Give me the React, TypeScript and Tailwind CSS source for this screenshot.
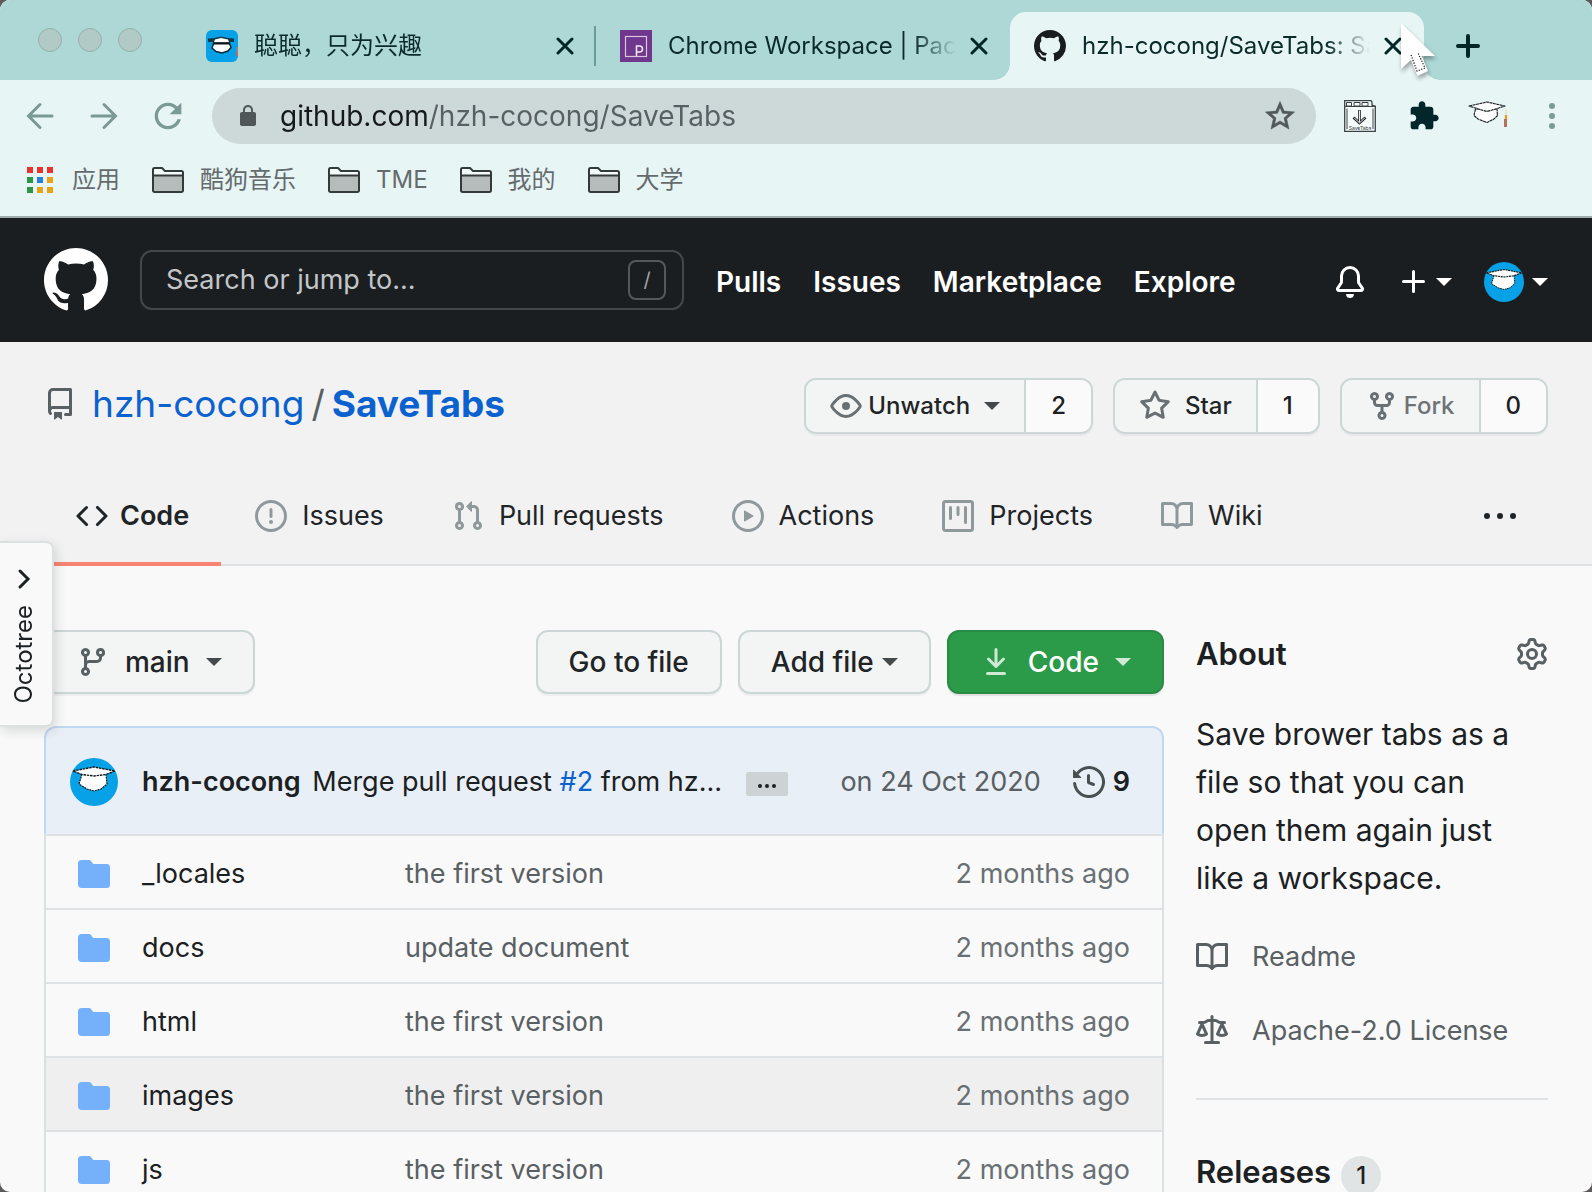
import React from "react";

const P = {
  github:
    "M8 0C3.58 0 0 3.58 0 8c0 3.54 2.29 6.53 5.47 7.59.4.07.55-.17.55-.38 0-.19-.01-.82-.01-1.49-2.01.37-2.53-.49-2.69-.94-.09-.23-.48-.94-.82-1.13-.28-.15-.68-.52-.01-.53.63-.01 1.08.58 1.23.82.72 1.21 1.87.87 2.33.66.07-.52.28-.87.51-1.07-1.78-.2-3.64-.89-3.64-3.95 0-.87.31-1.59.82-2.15-.08-.2-.36-1.02.08-2.12 0 0 .67-.21 2.2.82.64-.18 1.32-.27 2-.27.68 0 1.36.09 2 .27 1.53-1.04 2.2-.82 2.2-.82.44 1.1.16 1.92.08 2.12.51.56.82 1.27.82 2.15 0 3.07-1.87 3.75-3.65 3.95.29.25.54.73.54 1.48 0 1.07-.01 1.93-.01 2.2 0 .21.15.46.55.38A8.013 8.013 0 0016 8c0-4.42-3.58-8-8-8z",
  repo: "M2 2.5A2.5 2.5 0 014.5 0h8.75a.75.75 0 01.75.75v12.5a.75.75 0 01-.75.75h-2.5a.75.75 0 110-1.5h1.75v-2h-8a1 1 0 00-.714 1.7.75.75 0 01-1.072 1.05A2.495 2.495 0 012 11.5v-9zm10.5-1V9h-8c-.356 0-.694.074-1 .208V2.5a1 1 0 011-1h8zM5 12.25v3.25a.25.25 0 00.4.2l1.45-1.087a.25.25 0 01.3 0L8.6 15.7a.25.25 0 00.4-.2v-3.25a.25.25 0 00-.25-.25h-3.5a.25.25 0 00-.25.25z",
  eye: "M1.679 7.932c.412-.621 1.242-1.75 2.366-2.717C5.175 4.242 6.527 3.5 8 3.5c1.473 0 2.824.742 3.955 1.715 1.124.967 1.954 2.096 2.366 2.717a.119.119 0 010 .136c-.412.621-1.242 1.75-2.366 2.717C10.825 11.758 9.473 12.5 8 12.5c-1.473 0-2.824-.742-3.955-1.715C2.92 9.818 2.09 8.69 1.679 8.068a.119.119 0 010-.136zM8 2c-1.981 0-3.67.992-4.933 2.078C1.797 5.169.88 6.423.43 7.1a1.619 1.619 0 000 1.798c.45.678 1.367 1.932 2.637 3.024C4.329 13.008 6.019 14 8 14c1.981 0 3.67-.992 4.933-2.078 1.27-1.091 2.187-2.345 2.637-3.023a1.619 1.619 0 000-1.798c-.45-.678-1.367-1.932-2.637-3.023C11.671 2.992 9.981 2 8 2zm0 8a2 2 0 100-4 2 2 0 000 4z",
  star: "M8 .25a.75.75 0 01.673.418l1.882 3.815 4.21.612a.75.75 0 01.416 1.279l-3.046 2.97.719 4.192a.75.75 0 01-1.088.791L8 12.347l-3.766 1.98a.75.75 0 01-1.088-.79l.72-4.194L.818 6.374a.75.75 0 01.416-1.28l4.21-.611L7.327.668A.75.75 0 018 .25zm0 2.445L6.615 5.5a.75.75 0 01-.564.41l-3.097.45 2.24 2.184a.75.75 0 01.216.664l-.528 3.084 2.769-1.456a.75.75 0 01.698 0l2.77 1.456-.53-3.084a.75.75 0 01.216-.664l2.24-2.183-3.096-.45a.75.75 0 01-.564-.41L8 2.694v.001z",
  fork: "M5 3.25a.75.75 0 11-1.5 0 .75.75 0 011.5 0zm0 2.122a2.25 2.25 0 10-1.5 0v.878A2.25 2.25 0 005.75 8.5h1.5v2.128a2.251 2.251 0 101.5 0V8.5h1.5a2.25 2.25 0 002.25-2.25v-.878a2.25 2.25 0 10-1.5 0v.878a.75.75 0 01-.75.75h-4.5A.75.75 0 015 6.25v-.878zm3.75 7.378a.75.75 0 11-1.5 0 .75.75 0 011.5 0zm3-8.75a.75.75 0 100-1.5.75.75 0 000 1.5z",
  code: "M4.72 3.22a.75.75 0 011.06 1.06L2.06 8l3.72 3.72a.75.75 0 11-1.06 1.06L.47 8.53a.75.75 0 010-1.06l4.25-4.25zm6.56 0a.75.75 0 10-1.06 1.06L13.94 8l-3.72 3.72a.75.75 0 101.06 1.06l4.25-4.25a.75.75 0 000-1.06l-4.25-4.25z",
  issue:
    "M8 1.5a6.5 6.5 0 100 13 6.5 6.5 0 000-13zM0 8a8 8 0 1116 0A8 8 0 010 8zm9 3a1 1 0 11-2 0 1 1 0 012 0zm-.25-6.25a.75.75 0 00-1.5 0v3.5a.75.75 0 001.5 0v-3.5z",
  pull: "M7.177 3.073L9.573.677A.25.25 0 0110 .854v4.792a.25.25 0 01-.427.177L7.177 3.427a.25.25 0 010-.354zM3.75 2.5a.75.75 0 100 1.5.75.75 0 000-1.5zm-2.25.75a2.25 2.25 0 113 2.122v5.256a2.251 2.251 0 11-1.5 0V5.372A2.25 2.25 0 011.5 3.25zM11 2.5h-1V4h1a1 1 0 011 1v5.628a2.251 2.251 0 101.5 0V5A2.5 2.5 0 0011 2.5zm1 10.25a.75.75 0 111.5 0 .75.75 0 01-1.5 0zM3.75 12a.75.75 0 100 1.5.75.75 0 000-1.5z",
  play: "M1.5 8a6.5 6.5 0 1113 0 6.5 6.5 0 01-13 0zM8 0a8 8 0 100 16A8 8 0 008 0zM6.379 5.227A.25.25 0 006 5.442v5.117a.25.25 0 00.379.214l4.264-2.559a.25.25 0 000-.428L6.379 5.227z",
  project:
    "M1.75 0A1.75 1.75 0 000 1.75v12.5C0 15.216.784 16 1.75 16h12.5A1.75 1.75 0 0016 14.25V1.75A1.75 1.75 0 0014.25 0H1.75zM1.5 1.75a.25.25 0 01.25-.25h12.5a.25.25 0 01.25.25v12.5a.25.25 0 01-.25.25H1.75a.25.25 0 01-.25-.25V1.75zM11.75 3a.75.75 0 00-.75.75v7.5a.75.75 0 001.5 0v-7.5a.75.75 0 00-.75-.75zm-8.25.75a.75.75 0 011.5 0v5.5a.75.75 0 01-1.5 0v-5.5zM8 3a.75.75 0 00-.75.75v3.5a.75.75 0 001.5 0v-3.5A.75.75 0 008 3z",
  book: "M0 1.75A.75.75 0 01.75 1h4.253c1.227 0 2.317.59 3 1.501A3.744 3.744 0 0111.006 1h4.245a.75.75 0 01.75.75v10.5a.75.75 0 01-.75.75h-4.507a2.25 2.25 0 00-1.591.659l-.622.621a.75.75 0 01-1.06 0l-.622-.621A2.25 2.25 0 005.258 13H.75a.75.75 0 01-.75-.75V1.75zm8.755 3a2.25 2.25 0 012.25-2.25H14.5v9h-3.757c-.71 0-1.4.201-1.992.572l.004-7.322zm-1.504 7.324l.004-5.073-.002-2.253A2.25 2.25 0 005.003 2.5H1.5v9h3.757a3.75 3.75 0 011.994.574z",
  branch:
    "M11.75 2.5a.75.75 0 100 1.5.75.75 0 000-1.5zm-2.25.75a2.25 2.25 0 113 2.122V6A2.5 2.5 0 0110 8.5H6a1 1 0 00-1 1v1.128a2.251 2.251 0 11-1.5 0V5.372a2.25 2.25 0 111.5 0v1.836A2.492 2.492 0 016 7h4a1 1 0 001-1v-.628A2.25 2.25 0 019.5 3.25zM4.25 12a.75.75 0 100 1.5.75.75 0 000-1.5zM3.5 3.25a.75.75 0 111.5 0 .75.75 0 01-1.5 0z",
  download:
    "M7.47 10.78a.75.75 0 001.06 0l3.75-3.75a.75.75 0 00-1.06-1.06L8.75 8.439V1.75a.75.75 0 00-1.5 0v6.69L4.78 5.97a.75.75 0 00-1.06 1.06l3.75 3.75zM3.75 13a.75.75 0 000 1.5h8.5a.75.75 0 000-1.5h-8.5z",
  gear: "M7.429 1.525a6.593 6.593 0 011.142 0c.036.003.108.036.137.146l.289 1.105c.147.56.55.967.997 1.189.174.086.341.183.501.29.417.278.97.423 1.53.27l1.102-.303c.11-.03.175.016.195.046.219.31.41.641.573.989.014.031.022.11-.059.19l-.815.806c-.411.406-.562.957-.53 1.456a4.588 4.588 0 010 .582c-.032.499.119 1.05.53 1.456l.815.806c.08.08.073.159.059.19a6.494 6.494 0 01-.573.99c-.02.029-.086.074-.195.045l-1.103-.303c-.559-.153-1.112-.008-1.529.27-.16.107-.327.204-.5.29-.449.222-.851.628-.998 1.189l-.289 1.105c-.029.11-.101.143-.137.146a6.613 6.613 0 01-1.142 0c-.036-.003-.108-.037-.137-.146l-.289-1.105c-.147-.56-.55-.967-.997-1.189a4.502 4.502 0 01-.501-.29c-.417-.278-.97-.423-1.53-.27l-1.102.303c-.11.03-.175-.016-.195-.046a6.492 6.492 0 01-.573-.989c-.014-.031-.022-.11.059-.19l.815-.806c.411-.406.562-.957.53-1.456a4.587 4.587 0 010-.582c.032-.499-.119-1.05-.53-1.456l-.815-.806c-.08-.08-.073-.159-.059-.19a6.44 6.44 0 01.573-.99c.02-.029.086-.075.195-.045l1.103.303c.559.153 1.112.008 1.529-.27.16-.107.327-.204.5-.29.449-.222.851-.628.998-1.189l.289-1.105c.029-.11.101-.143.137-.146zM8 0c-.236 0-.47.01-.701.03-.743.065-1.29.615-1.458 1.261l-.29 1.106c-.017.066-.078.158-.211.224a5.994 5.994 0 00-.668.386c-.123.082-.233.09-.3.071L3.27 2.776c-.644-.177-1.392.02-1.82.63a7.977 7.977 0 00-.704 1.217c-.315.675-.111 1.422.363 1.891l.815.806c.05.048.098.147.088.294a6.084 6.084 0 000 .772c.01.147-.038.246-.088.294l-.815.806c-.474.469-.678 1.216-.363 1.891.2.428.436.835.704 1.218.428.609 1.176.806 1.82.63l1.103-.303c.066-.019.176-.011.299.071.213.143.436.272.668.386.133.066.194.158.212.224l.289 1.106c.169.646.715 1.196 1.458 1.26a8.094 8.094 0 001.402 0c.743-.064 1.29-.614 1.458-1.26l.29-1.106c.017-.066.078-.158.211-.224a5.98 5.98 0 00.668-.386c.123-.082.233-.09.3-.071l1.102.302c.644.177 1.392-.02 1.82-.63.268-.382.505-.789.704-1.217.315-.675.111-1.422-.364-1.891l-.814-.806c-.05-.048-.098-.147-.088-.294a6.1 6.1 0 000-.772c-.01-.147.039-.246.088-.294l.814-.806c.475-.469.679-1.216.364-1.891a7.992 7.992 0 00-.704-1.218c-.428-.609-1.176-.806-1.82-.63l-1.103.303c-.066.019-.176.011-.299-.071a5.991 5.991 0 00-.668-.386c-.133-.066-.194-.158-.212-.224L10.16 1.29C9.99.645 9.444.095 8.701.031A8.094 8.094 0 008 0zm1.5 8a1.5 1.5 0 11-3 0 1.5 1.5 0 013 0zM11 8a3 3 0 11-6 0 3 3 0 016 0z",
  law: "M8.75.75a.75.75 0 00-1.5 0V2h-.984c-.305 0-.604.08-.869.23l-1.288.737A.25.25 0 013.984 3H1.75a.75.75 0 000 1.5h.428L.066 9.192a.75.75 0 00.154.838l.53-.53-.53.53v.001l.002.002.002.002.006.006.016.015.045.04a3.514 3.514 0 00.686.45A4.492 4.492 0 003 11c.88 0 1.556-.22 2.023-.454a3.515 3.515 0 00.686-.45l.045-.04.016-.015.006-.006.002-.002.001-.002L5.25 9.5l.53.53a.75.75 0 00.154-.838L3.822 4.5h.162c.305 0 .604-.08.869-.23l1.289-.737a.25.25 0 01.124-.033h.984V13h-2.5a.75.75 0 000 1.5h6.5a.75.75 0 000-1.5h-2.5V3.5h.984a.25.25 0 01.124.033l1.29.736c.264.152.563.231.868.231h.162l-2.112 4.692a.75.75 0 00.154.838l.53-.53-.53.53v.001l.002.002.002.002.006.006.016.015.045.04a3.517 3.517 0 00.686.45A4.492 4.492 0 0013 11c.88 0 1.556-.22 2.023-.454a3.512 3.512 0 00.686-.45l.045-.04.01-.01.006-.005.006-.006.002-.002.001-.002-.529-.531.53.53a.75.75 0 00.154-.838L13.823 4.5h.427a.75.75 0 000-1.5h-2.234a.25.25 0 01-.124-.033l-1.29-.736A1.75 1.75 0 009.735 2H8.75V.75zM1.695 9.227c.285.135.718.273 1.305.273s1.02-.138 1.305-.273L3 6.327l-1.305 2.9zm10 0c.285.135.718.273 1.305.273s1.02-.138 1.305-.273L13 6.327l-1.305 2.9z",
  history:
    "M1.643 3.143L.427 1.927A.25.25 0 000 2.104V5.75c0 .138.112.25.25.25h3.646a.25.25 0 00.177-.427L2.715 4.215a6.5 6.5 0 11-1.18 4.458.75.75 0 10-1.493.154 8.001 8.001 0 101.6-5.684zM7.75 4a.75.75 0 01.75.75v2.992l2.028.812a.75.75 0 01-.557 1.392l-2.5-1A.75.75 0 017 8.25v-3.5A.75.75 0 017.75 4z",
  bell: "M8 16a2 2 0 001.985-1.75c.017-.137-.097-.25-.235-.25h-3.5c-.138 0-.252.113-.235.25A2 2 0 008 16zM8 1.5A3.5 3.5 0 004.5 5v2.947c0 .346-.102.683-.294.97l-1.703 2.556a.018.018 0 00-.003.01l.001.006c0 .002.002.004.004.006a.017.017 0 00.006.004l.007.001h10.964l.007-.001a.016.016 0 00.006-.004.016.016 0 00.004-.006l.001-.007a.017.017 0 00-.003-.01l-1.703-2.554a1.75 1.75 0 01-.294-.97V5A3.5 3.5 0 008 1.5zM3 5a5 5 0 0110 0v2.947c0 .05.015.098.042.139l1.703 2.555A1.518 1.518 0 0113.482 13H2.518a1.518 1.518 0 01-1.263-2.36l1.703-2.554A.25.25 0 003 7.947V5z",
  plus: "M7.75 2a.75.75 0 01.75.75V7h4.25a.75.75 0 110 1.5H8.5v4.25a.75.75 0 11-1.5 0V8.5H2.75a.75.75 0 010-1.5H7V2.75A.75.75 0 017.75 2z",
  folder:
    "M1.75 1A1.75 1.75 0 000 2.75v10.5C0 14.216.784 15 1.75 15h12.5A1.75 1.75 0 0016 13.25v-8.5A1.75 1.75 0 0014.25 3h-6.5a.25.25 0 01-.2-.1l-.9-1.2c-.33-.44-.85-.7-1.4-.7h-3.5z",
};

function Oct({ d, className = "size-8" }: { d: string; className?: string }) {
  return (
    <svg viewBox="0 0 16 16" className={`shrink-0 ${className}`} fill="currentColor" fillRule="evenodd" aria-hidden="true">
      <path d={d} />
    </svg>
  );
}

function Material({ d, className = "size-8", box = "0 0 24 24" }: { d: string; className?: string; box?: string }) {
  return (
    <svg viewBox={box} className={`shrink-0 ${className}`} fill="currentColor" aria-hidden="true">
      <path d={d} />
    </svg>
  );
}

function Caret({ className = "" }: { className?: string }) {
  return (
    <svg viewBox="0 0 16 8" className={`h-2 w-4 shrink-0 ${className}`} fill="currentColor" aria-hidden="true">
      <path d="M0 0h16L8 8z" />
    </svg>
  );
}

function Avatar({ className }: { className: string }) {
  return (
    <svg viewBox="0 0 48 48" className={`shrink-0 rounded-full bg-[#06a1e6] ${className}`} aria-hidden="true">
      <g fill="#fff" stroke="#10191d" strokeLinejoin="round">
        <path d="M12 16L9 26L17 31L24 33L31 31L37 26L36 16z" strokeWidth="1.200" strokeDasharray="2 .8" />
        <path d="M3 13L24 9L45 13L36 16.500L24 18L12 16.500z" strokeWidth="1.400" strokeDasharray="2.500 .8" />
      </g>
    </svg>
  );
}

function Cross() {
  return (
    <svg viewBox="0 0 18 18" className="size-[18px] shrink-0" stroke="currentColor" strokeWidth="3" strokeLinecap="round" aria-hidden="true">
      <path d="M2 2L16 16M16 2L2 16" />
    </svg>
  );
}

function CapFavicon() {
  return (
    <svg viewBox="0 0 32 32" className="size-8 shrink-0" aria-hidden="true">
      <rect width="32" height="32" rx="6" fill="#06a1e6" />
      <path d="M2 8.500L8 8L15 6.500L22 8L28 8.500V12H2z" fill="#123a48" />
      <path d="M8 12L6 18L10 21.500L16 23L22 21L25 17.500L23 12z" fill="#fff" stroke="#0b2a36" strokeWidth="1.500" />
      <path d="M9 9.500L15 8L22 9.500L23 12H8z" fill="#fff" />
      <path d="M7 13.500H24" stroke="#0b1418" strokeWidth="2" />
      <path d="M31 17v9" stroke="#7d8a94" strokeWidth="2" />
      <path d="M31 22v4" stroke="#b0716a" strokeWidth="2" />
    </svg>
  );
}

function PackFavicon() {
  return (
    <svg viewBox="0 0 32 32" className="size-8 shrink-0" fill="none" aria-hidden="true">
      <rect width="32" height="32" fill="#70388c" />
      <rect x="5.500" y="6.500" width="21" height="20" stroke="#d9c4e2" strokeWidth="1.200" />
      <path d="M16.500 26V16h3a2.500 2.500 0 010 6h-3" stroke="#f3eaf6" strokeWidth="1.500" />
    </svg>
  );
}

const fade = "[mask-image:linear-gradient(to_right,#000_85%,transparent)]";

function BrowserTab({ icon, title, active = false, divider = false }: { icon: React.ReactNode; title: string; active?: boolean; divider?: boolean }) {
  const flare =
    "relative rounded-t-2xl bg-[#e7f5f5] before:absolute before:bottom-0 before:-left-4 before:size-4 before:bg-[radial-gradient(circle_at_0_0,transparent_15.5px,#e7f5f5_16px)] after:absolute after:bottom-0 after:-right-4 after:size-4 after:bg-[radial-gradient(circle_at_100%_0,transparent_15.5px,#e7f5f5_16px)]";
  return (
    <div role="tab" aria-selected={active} className={`flex h-[68px] w-[414px] shrink items-center pl-6 ${active ? flare : ""}`}>
      {icon}
      <span className={`ml-4 min-w-0 flex-1 overflow-hidden text-2xl whitespace-nowrap text-[#0b2a2a] ${fade}`}>{title}</span>
      <button type="button" aria-label={`Close ${title}`} className="ml-3.5 text-[#022626]">
        <Cross />
      </button>
      <span className={`ml-5 h-10 w-[2px] ${divider ? "bg-[#6a9a9a]" : ""}`} />
    </div>
  );
}

function BookmarkFolder({ label }: { label: string }) {
  return (
    <a href="#" className="flex items-center gap-4">
      <svg viewBox="0 0 32 26" className="h-[26px] w-8 shrink-0" aria-hidden="true">
        <path d="M1 2.500A1.500 1.500 0 012.500 1H10l3 3h16.500A1.500 1.500 0 0131 5.500V9H1z" fill="#f4fbfb" />
        <path d="M1 8h30v17H1z" fill="#b5bcbb" />
        <path d="M1 2.500A1.500 1.500 0 012.500 1H10l3 3h16.500A1.500 1.500 0 0131 5.500V23.500A1.500 1.500 0 0129.500 25h-27A1.500 1.500 0 011 23.500zM1 8.500h30" fill="none" stroke="#343a3a" strokeWidth="2" />
      </svg>
      <span>{label}</span>
    </a>
  );
}

function Apps() {
  const colors = ["#e8352e", "#e8352e", "#e8352e", "#2c9746", "#2a7de1", "#e8a317", "#2c9746", "#e8a317", "#e8a317"];
  return (
    <svg viewBox="0 0 32 32" className="size-8 shrink-0" aria-hidden="true">
      {colors.map((c, i) => (
        <rect key={i} x={3 + (i % 3) * 10} y={3 + Math.floor(i / 3) * 10} width="6" height="6" fill={c} />
      ))}
    </svg>
  );
}

function SaveTabsIcon() {
  return (
    <svg viewBox="0 0 32 32" className="size-8 shrink-0" fill="none" stroke="#3c4244" aria-hidden="true">
      <path d="M.7 .7H27l1 1.500v3l3.300 1V31.300H.7z" fill="#f5fafa" strokeWidth="1.300" />
      <path d="M2.500 2.500h5v3.500h-5zM10 2.500h6v3.500h-6zM18 2.500h6v3.500h-6z" strokeWidth="1" />
      <path d="M1 6.500h30M3 8.500v20.500M29 8.500v20.500" strokeWidth="1" />
      <path d="M15.500 10v12M9.500 17.500L15.500 23L21.500 17.500" stroke="#1e2224" strokeWidth="2.600" />
      <path d="M15.500 10.500v12M10.200 18L15.500 22.800L20.800 18" stroke="#fff" strokeWidth=".9" />
      <text x="16" y="29.500" textAnchor="middle" fontSize="5" fill="#33383a" stroke="none" fontFamily="Inter, sans-serif">
        SaveTabs
      </text>
    </svg>
  );
}

function CapIcon() {
  return (
    <svg viewBox="0 0 40 32" className="h-8 w-10 shrink-0" fill="#fff" stroke="#20272a" strokeLinejoin="round" aria-hidden="true">
      <path d="M7.500 9L6 15.500L10 19L19 22.500L26 19L29.500 15.500L29 9z" strokeWidth="1.200" strokeDasharray="3 .5" />
      <path d="M1 6L19 2L37 6L26 9.500L19 11.500L12 9.500z" strokeWidth="1.200" strokeDasharray="3 .5" />
      <path d="M38 9v6" stroke="#e6e2c6" strokeWidth="1.500" />
      <path d="M38 15v5" stroke="#e0a030" strokeWidth="2.400" />
      <path d="M37.500 19v8" stroke="#b5705a" strokeWidth="3" />
    </svg>
  );
}

function BrowserChrome() {
  return (
    <header className="bg-[#e7f5f5]">
      <div className="flex h-20 items-center bg-[#add8d6]">
        <div className="flex w-[182px] shrink-0 gap-4 pl-[38px]">
          {["Close window", "Minimize window", "Zoom window"].map((n) => (
            <button key={n} type="button" aria-label={n} className="size-6 rounded-full border border-[#94b0ad] bg-[#b2cac6]" />
          ))}
        </div>
        <div role="tablist" className="mt-3 flex min-w-0">
          <BrowserTab icon={<CapFavicon />} title="聪聪，只为兴趣" divider />
          <BrowserTab icon={<PackFavicon />} title="Chrome Workspace | Pack" />
          <BrowserTab icon={<Oct d={P.github} className="size-8 text-[#181d20]" />} title="hzh-cocong/SaveTabs: Sa" active />
        </div>
        <button type="button" aria-label="New tab" className="mt-3 ml-8 text-[#022626]">
          <svg viewBox="0 0 24 24" className="size-6" stroke="currentColor" strokeWidth="4" strokeLinecap="round" aria-hidden="true">
            <path d="M12 2v20M2 12h20" />
          </svg>
        </button>
      </div>

      <div className="flex h-[72px] items-center px-6 text-[#7b9995]">
        <div className="flex shrink-0 gap-8">
          <button type="button" aria-label="Back">
            <svg viewBox="0 0 32 32" className="size-8" fill="none" stroke="currentColor" strokeWidth="3" strokeLinecap="round" aria-hidden="true">
              <path d="M28 16H5M16 4.500L4.500 16L16 27.500" />
            </svg>
          </button>
          <button type="button" aria-label="Forward">
            <svg viewBox="0 0 32 32" className="size-8" fill="none" stroke="currentColor" strokeWidth="3" strokeLinecap="round" aria-hidden="true">
              <path d="M4 16H27M16 4.500L27.500 16L16 27.500" />
            </svg>
          </button>
          <button type="button" aria-label="Reload">
            <Material
              box="2.400 2.400 19.200 19.200"
              d="M17.650 6.350C16.200 4.900 14.210 4 12 4c-4.420 0-7.990 3.580-7.990 8s3.570 8 7.990 8c3.730 0 6.840-2.550 7.730-6h-2.080c-.82 2.330-3.040 4-5.650 4-3.310 0-6-2.690-6-6s2.690-6 6-6c1.660 0 3.140.69 4.220 1.780L13 11h7V4l-2.350 2.350z"
            />
          </button>
        </div>
        <div className="ml-7 flex h-14 min-w-0 flex-1 items-center rounded-full bg-[#cdd8d8] pr-5 pl-6 text-[#505759]">
          <Material
            className="size-6"
            d="M18 8h-1V6c0-2.760-2.240-5-5-5S7 3.240 7 6v2H6c-1.100 0-2 .9-2 2v10c0 1.100.9 2 2 2h12c1.100 0 2-.9 2-2V10c0-1.100-.9-2-2-2zM8.900 6c0-1.710 1.390-3.100 3.100-3.100s3.100 1.390 3.100 3.100v2H8.900V6z"
          />
          <input
            aria-label="Address"
            defaultValue="github.com/hzh-cocong/SaveTabs"
            className="ml-5 h-10 min-w-0 flex-1 bg-[linear-gradient(to_right,#15191b_148px,#596063_148px)] bg-clip-text text-[28px] text-transparent outline-none"
          />
          <button type="button" aria-label="Bookmark this page">
            <Material
              box="1 1 22 22"
              className="size-8 stroke-current [stroke-width:0.4]"
              d="M22 9.240l-7.190-.62L12 2 9.190 8.630 2 9.240l5.460 4.730L5.820 21 12 17.270 18.180 21l-1.630-7.030L22 9.240zM12 15.400l-3.760 2.270 1-4.280-3.320-2.880 4.380-.38L12 6.100l1.710 4.040 4.380.38-3.320 2.880 1 4.280L12 15.400z"
            />
          </button>
        </div>
        <div className="ml-7 flex shrink-0 items-center gap-8">
          <button type="button" aria-label="SaveTabs">
            <SaveTabsIcon />
          </button>
          <button type="button" aria-label="Extensions" className="text-[#03262a]">
            <Material d="M20.500 11H19V7c0-1.100-.9-2-2-2h-4V3.500C13 2.120 11.880 1 10.500 1S8 2.120 8 3.500V5H4c-1.100 0-1.990.9-1.990 2v3.800H3.500c1.490 0 2.700 1.210 2.700 2.700s-1.210 2.700-2.700 2.700H2V20c0 1.100.9 2 2 2h3.800v-1.500c0-1.490 1.210-2.700 2.700-2.700 1.490 0 2.700 1.210 2.700 2.700V22H17c1.100 0 2-.9 2-2v-4h1.500c1.380 0 2.500-1.120 2.500-2.500S21.880 11 20.500 11z" />
          </button>
          <button type="button" aria-label="Profile" className="-mx-1">
            <CapIcon />
          </button>
          <button type="button" aria-label="Menu">
            <svg viewBox="0 0 32 32" className="size-8" fill="currentColor" aria-hidden="true">
              <circle cx="16" cy="6" r="3" />
              <circle cx="16" cy="16" r="3" />
              <circle cx="16" cy="26" r="3" />
            </svg>
          </button>
        </div>
      </div>

      <nav aria-label="Bookmarks" className="flex h-[66px] items-start gap-8 border-b-2 border-[#9fabaa] px-6 pt-2.5 text-2xl leading-9 text-[#656b6d]">
        <a href="#" className="flex items-center gap-4">
          <Apps />
          <span>应用</span>
        </a>
        <BookmarkFolder label="酷狗音乐" />
        <BookmarkFolder label="TME" />
        <BookmarkFolder label="我的" />
        <BookmarkFolder label="大学" />
      </nav>
    </header>
  );
}

function SiteHeader() {
  return (
    <header className="flex h-[124px] items-center bg-[#1a1e21] px-11 text-white">
      <a href="#" aria-label="Homepage" className="shrink-0">
        <Oct d={P.github} className="size-16" />
      </a>
      <div className="ml-8 flex h-[60px] w-[544px] min-w-0 items-center rounded-xl border-2 border-[#44484b] pr-4 pl-6">
        <input aria-label="Search" placeholder="Search or jump to..." className="min-w-0 flex-1 bg-transparent text-[27px] outline-none placeholder:text-[#c3c6c8]" />
        <kbd className="flex h-10 w-[38px] shrink-0 items-center justify-center rounded-lg border-2 border-[#54585b] font-['Inter'] text-xl text-[#a0a4a6]">/</kbd>
      </div>
      <nav aria-label="Global" className="ml-8 flex gap-8 pt-1 text-[28px] font-semibold">
        <a href="#">Pulls</a>
        <a href="#">Issues</a>
        <a href="#">Marketplace</a>
        <a href="#">Explore</a>
      </nav>
      <div className="ml-auto flex shrink-0 items-center pt-1">
        <button type="button" aria-label="Notifications">
          <Oct d={P.bell} />
        </button>
        <button type="button" aria-label="Create new" className="ml-8 flex items-center gap-1.5">
          <Oct d={P.plus} />
          <Caret />
        </button>
        <button type="button" aria-label="User menu" className="ml-8 flex items-center gap-2">
          <Avatar className="size-10" />
          <Caret />
        </button>
      </div>
    </header>
  );
}

function CountButton({ icon, label, count, caret = false, muted = false }: { icon: string; label: string; count: string; caret?: boolean; muted?: boolean }) {
  return (
    <div className="flex h-14 overflow-hidden rounded-xl border-2 border-[#cdd6d6] text-2xl font-medium shadow-[0_2px_1px_rgba(27,31,35,0.05)]">
      <button type="button" className={`flex items-center border-r-2 border-[#cdd6d6] bg-[#f3f4f4] px-6 ${muted ? "text-[#6d7375]" : "text-[#1f2426]"}`}>
        <Oct d={icon} className="size-8 text-[#697073]" />
        <span className={caret || muted ? "ml-1.5" : "ml-3.5"}>{label}</span>
        {caret && <Caret className="ml-3.5 text-[#44494b]" />}
      </button>
      <a href="#" aria-label={`${label} count`} className="flex items-center bg-[#fafafa] px-[25px] text-[#1b2022]">
        {count}
      </a>
    </div>
  );
}

function RepoHead() {
  const tabs = [
    ["Issues", P.issue],
    ["Pull requests", P.pull],
    ["Actions", P.play],
    ["Projects", P.project],
    ["Wiki", P.book],
  ];
  return (
    <div className="border-b-2 border-[#dfe2e4] bg-[#f2f2f3] pt-9">
      <div className="flex h-14 items-center px-11">
        <div className="flex items-center pb-1">
          <Oct d={P.repo} className="size-8 text-[#596063]" />
          <h1 className="ml-4 flex text-[37px] leading-[52px] text-[#0b62cf]">
            <a href="#">hzh-cocong</a>
            <span className="mx-[7px] text-[#596063]">/</span>
            <a href="#" className="font-bold">
              SaveTabs
            </a>
          </h1>
        </div>
        <div className="ml-auto flex gap-5">
          <CountButton icon={P.eye} label="Unwatch" count="2" caret />
          <CountButton icon={P.star} label="Star" count="1" />
          <CountButton icon={P.fork} label="Fork" count="0" muted />
        </div>
      </div>
      <nav aria-label="Repository" className="mt-8 -mb-[2px] flex h-[100px] items-stretch px-11 text-[27px] text-[#1f2426]">
        <a href="#" aria-current="page" className="flex items-center gap-3 border-b-4 border-[#f78472] px-8 pt-1 font-semibold">
          <Oct d={P.code} />
          Code
        </a>
        {tabs.map(([label, d]) => (
          <a key={label} href="#" className="flex items-center gap-[15px] border-b-4 border-transparent px-[34px] pt-1">
            <Oct d={d} className="size-8 text-[#8f999b]" />
            {label}
          </a>
        ))}
        <button type="button" aria-label="More" className="mr-8 ml-auto">
          <svg viewBox="0 0 32 32" className="size-8" fill="currentColor" aria-hidden="true">
            <circle cx="3" cy="16" r="3" />
            <circle cx="16" cy="16" r="3" />
            <circle cx="29" cy="16" r="3" />
          </svg>
        </button>
      </nav>
    </div>
  );
}

const files = [
  ["_locales", "the first version"],
  ["docs", "update document"],
  ["html", "the first version"],
  ["images", "the first version"],
  ["js", "the first version"],
];

const btn =
  "flex h-16 shrink-0 items-center rounded-xl border-2 border-[#cdd6d6] bg-[#f3f4f4] px-[31px] text-[28px] font-medium text-[#1f2426] shadow-[0_2px_1px_rgba(27,31,35,0.05)]";
const cell = "border-t-2 border-[#dfe2e4] pt-1 pb-0";

function FilePanel() {
  return (
    <section className="min-w-0 flex-1 text-[27px]">
      <div className="flex gap-4">
        <button type="button" className={btn}>
          <Oct d={P.branch} className="size-8 text-[#596063]" />
          <span className="mx-4">main</span>
          <Caret className="text-[#44494b]" />
        </button>
        <a href="#" className={`ml-auto ${btn}`}>
          Go to file
        </a>
        <button type="button" className={btn}>
          Add file
          <Caret className="ml-2 text-[#44494b]" />
        </button>
        <button
          type="button"
          className="flex h-16 shrink-0 items-center rounded-xl border-2 border-[#2b8a46] bg-[#2c9b49] px-[31px] text-[28px] font-medium text-white shadow-[0_2px_1px_rgba(27,31,35,0.1)]"
        >
          <Oct d={P.download} className="size-8 text-[#cfe9d6]" />
          <span className="mx-4">Code</span>
          <Caret className="text-[#cfe9d6]" />
        </button>
      </div>

      <div className="mt-8 flex h-[108px] items-center rounded-t-xl border-2 border-b-0 border-[#c1d8f1] bg-[#e9eff6] pt-0.5 pr-8 pl-6 text-[#1b2022]">
        <Avatar className="size-12" />
        <p className="ml-6 w-[580px] min-w-0 whitespace-nowrap text-[#596063]">
          <a href="#" className="mr-1 font-semibold text-[#1b2022]">
            hzh-cocong
          </a>{" "}
          <a href="#" className="text-[#1b2022]">
            Merge pull request
          </a>{" "}
          <a href="#" className="text-[#0b62cf]">
            #2
          </a>{" "}
          <a href="#" className="text-[#1b2022]">
            from hz...
          </a>
        </p>
        <button type="button" aria-label="Show full message" className="mt-1 ml-6 flex h-6 w-[42px] shrink-0 items-center justify-center gap-[3px] rounded-[2px] bg-[#cdd2d5] pt-1">
          <span className="size-1 rounded-full bg-[#1b2022]" />
          <span className="size-1 rounded-full bg-[#1b2022]" />
          <span className="size-1 rounded-full bg-[#1b2022]" />
        </button>
        <a href="#" className="ml-auto shrink-0 text-[#596063]">
          on 24 Oct 2020
        </a>
        <a href="#" className="ml-8 flex shrink-0 items-center gap-2 font-semibold">
          <Oct d={P.history} className="size-8 text-[#4a5052]" />9
        </a>
      </div>
      <div className="border-x-2 border-[#dbe0e1]">
        <table className="w-full table-fixed border-separate border-spacing-0">
          <colgroup>
            <col className="w-24" />
            <col className="w-[263px]" />
            <col />
            <col className="w-[240px]" />
          </colgroup>
          <tbody>
            {files.map(([name, msg]) => (
              <tr key={name} className={name === "images" ? "bg-[#efeff0]" : ""}>
                <td className={`h-[74px] pl-8 text-[#75b1fa] ${cell}`}>
                  <Oct d={P.folder} className="size-8" />
                </td>
                <td className={cell}>
                  <a href="#" className="text-[#1b2022]">
                    {name}
                  </a>
                </td>
                <td className={cell}>
                  <a href="#" className="text-[#596063]">
                    {msg}
                  </a>
                </td>
                <td className={`pr-8 text-right whitespace-nowrap text-[#697073] ${cell}`}>2 months ago</td>
              </tr>
            ))}
          </tbody>
        </table>
      </div>
    </section>
  );
}

function Sidebar() {
  return (
    <aside className="w-[352px] shrink-0 text-[#1b2022]">
      <div className="flex items-center justify-between">
        <h2 className="text-[31px] leading-12 font-semibold">About</h2>
        <button type="button" aria-label="Edit repository details" className="text-[#596063]">
          <Oct d={P.gear} />
        </button>
      </div>
      <p className="mt-8 pr-6 text-[30px] leading-12">Save brower tabs as a file so that you can open them again just like a workspace.</p>
      <a href="#" className="mt-[34px] flex items-center gap-6 text-[27px] leading-[42px] text-[#596063]">
        <Oct d={P.book} />
        Readme
      </a>
      <a href="#" className="mt-8 flex items-center gap-6 text-[27px] leading-[42px] whitespace-nowrap text-[#596063]">
        <Oct d={P.law} />
        Apache-2.0 License
      </a>
      <hr className="mt-[46px] border-t-2 border-[#dfe2e4]" />
      <h2 className="mt-12 flex items-center gap-2.5 text-[31px] leading-12 font-semibold">
        <a href="#">Releases</a>
        <span className="mt-2 flex size-10 items-center justify-center rounded-full bg-[#e1e4e4] text-2xl font-medium">1</span>
      </h2>
    </aside>
  );
}

function Pointer() {
  return (
    <svg viewBox="0 0 40 60" className="pointer-events-none absolute top-[22px] left-[1400px] z-20 h-[60px] w-10 drop-shadow-[1px_3px_2px_rgba(0,0,0,0.35)]" aria-hidden="true">
      <path d="M1 1V47L11 38L17.500 54L28 49L21.500 34H35z" fill="#fff" />
      <path d="M11 33L17 49L25 46L18 31" fill="none" stroke="#111" strokeWidth="1.200" strokeDasharray="1.200 1.500" />
    </svg>
  );
}

export default function App() {
  return (
    <div className="h-screen bg-[#5d5a5c]">
      <div className="relative h-full overflow-hidden rounded-[10px] bg-[#f9f9f9] font-['Inter','Noto_Sans_CJK_SC',sans-serif]">
        <BrowserChrome />
        <SiteHeader />
        <RepoHead />
        <main className="flex gap-8 px-11 pt-16">
          <FilePanel />
          <Sidebar />
        </main>
        <button
          type="button"
          className="absolute top-[541px] left-0 z-10 flex h-[186px] w-[54px] flex-col items-center rounded-r-lg border-2 border-l-0 border-[#dbe0e1] bg-[#f9f9f9] pt-6 pr-1 text-[#1b2022] shadow-[2px_4px_12px_rgba(27,31,35,0.15)]"
        >
          <svg viewBox="0 0 24 24" className="size-6" fill="none" stroke="currentColor" strokeWidth="3" strokeLinecap="round" aria-hidden="true">
            <path d="M8 4L16 12L8 20" />
          </svg>
          <span className="mt-3.5 rotate-180 text-2xl leading-8 [writing-mode:vertical-rl]">Octotree</span>
        </button>
        <Pointer />
      </div>
    </div>
  );
}
